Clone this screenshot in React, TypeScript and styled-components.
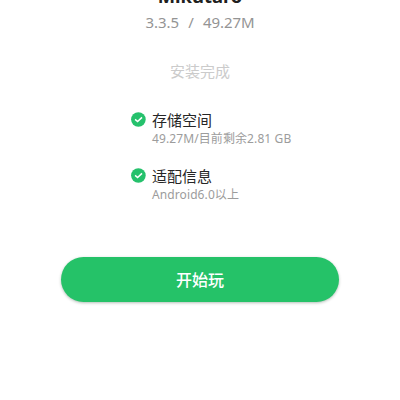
import React from "react";
import styled, { createGlobalStyle } from "styled-components";

const GlobalStyle = createGlobalStyle`
  body {
    margin: 0;
    background: #fff;
    overflow: hidden;
    font-family: "Noto Sans", "Noto Sans CJK SC", sans-serif;
  }
`;

const Screen = styled.main`
  width: 400px;
  height: 400px;
  overflow: hidden;
  display: flex;
  flex-direction: column;
  align-items: center;
  background: #fff;
  white-space: pre;
`;

const Title = styled.h1`
  margin: -19px 0 0;
  height: 30px;
  font-size: 18.4px;
  line-height: 29px;
  font-weight: 700;
  color: #202020;
`;

const Version = styled.div`
  margin-top: 1px;
  height: 20px;
  line-height: 20px;
  font-size: 15px;
  letter-spacing: -0.08px;
  word-spacing: 5.5px;
  color: #949494;
`;

const Status = styled.div`
  margin-top: 29px;
  height: 20px;
  line-height: 20px;
  font-size: 15px;
  color: #cbcbcb;
`;

const Checks = styled.ul`
  list-style: none;
  margin: 28px 0 0 131px;
  padding: 0;
  width: 269px;
  align-self: flex-start;
`;

const Check = styled.li`
  display: flex;
  gap: 6px;
  height: 56px;

  svg {
    flex: none;
    margin-top: 3px;
  }
`;

const Label = styled.div`
  height: 21px;
  line-height: 22px;
  font-size: 15px;
  color: #262626;
`;

const Detail = styled.div`
  height: 18px;
  line-height: 18px;
  font-size: 12px;
  letter-spacing: 0.1px;
  color: #9c9c9c;
`;

const PlayButton = styled.button`
  margin-top: 36px;
  width: 278px;
  height: 45px;
  flex: none;
  border: 0;
  padding: 0;
  border-radius: 23px;
  background: #25c268;
  box-shadow: 0 1px 3px rgba(0, 40, 20, 0.3);
  color: #fff;
  font: 500 16px/45px "Noto Sans CJK SC", sans-serif;
`;

const CheckIcon = () => (
  <svg width="15" height="15" viewBox="0 0 15 15" fill="none">
    <circle cx="7.4" cy="7.5" r="7.3" fill="#25c16c" />
    <path d="M4.1 7.4 6.6 9.6 11 5.4" stroke="#fff" strokeWidth="1.5" />
  </svg>
);

const checks = [
  { label: "存储空间", detail: "49.27M/目前剩余2.81 GB" },
  { label: "适配信息", detail: "Android6.0以上" },
];

export default function App() {
  return (
    <Screen>
      <GlobalStyle />
      <Title>Mikutaro</Title>
      <Version>3.3.5 / 49.27M</Version>
      <Status>安装完成</Status>
      <Checks>
        {checks.map((c) => (
          <Check key={c.label}>
            <CheckIcon />
            <div>
              <Label>{c.label}</Label>
              <Detail>{c.detail}</Detail>
            </div>
          </Check>
        ))}
      </Checks>
      <PlayButton>开始玩</PlayButton>
    </Screen>
  );
}
